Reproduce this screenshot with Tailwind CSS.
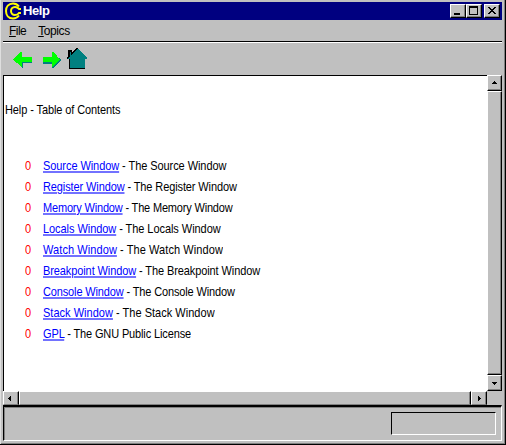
<!DOCTYPE html>
<html lang="en"><head><meta charset="utf-8"><title>Help</title>
<script src="https://cdn.jsdelivr.net/npm/@tailwindcss/browser@4"></script></head>
<body class="w-[506px] h-[445px] overflow-hidden bg-[#c0c0c0] text-black text-[12px] font-['Liberation_Sans',Arial,sans-serif]">
<div class="w-[506px] h-[445px] flex flex-col pl-[2px] pt-[2px] pr-[2px] border-r border-b border-black shadow-[inset_1px_0_0_#dfdfdf,inset_-1px_-1px_0_#808080]">
  <header class="h-[18px] mr-[1px] ml-[1px] bg-[#000080] flex items-center shrink-0 pr-[2px]">
    <svg class="w-[18px] h-[18px] ml-[1px]" viewBox="0 0 18 18" fill="none" stroke="#ff0" stroke-width="2"><path d="M15 4.500C13.500 2.500 11.500 1.500 9 1.500C4.500 1.500 2 5 2 9s2.500 7.500 7 7.500c2.500 0 4.500-1 6-3"/><path d="M17 7h-2C14 5.500 12.500 5 11 5C8.500 5 7 7 7 9s1.500 4 4 4c1.500 0 3-.5 4-2h2"/></svg>
    <h1 class="text-white font-bold text-[13px] leading-[18px] ml-[1px] tracking-[-0.45px]">Help</h1>
    <div class="ml-auto flex">
      <button class="w-[16px] h-[14px] bg-[#c0c0c0] border border-t-white border-l-white border-r-black border-b-black shadow-[inset_-1px_-1px_0_#808080]"><svg class="block" width="14" height="12" shape-rendering="crispEdges"><path d="M3 8h6v2H3z"/></svg></button>
      <button class="w-[16px] h-[14px] bg-[#c0c0c0] border border-t-white border-l-white border-r-black border-b-black shadow-[inset_-1px_-1px_0_#808080]"><svg class="block" width="14" height="12" shape-rendering="crispEdges"><path fill-rule="evenodd" d="M2 1h9v9H2zM3 3v6h7V3z"/></svg></button>
      <button class="ml-[2px] w-[16px] h-[14px] bg-[#c0c0c0] border border-t-white border-l-white border-r-black border-b-black shadow-[inset_-1px_-1px_0_#808080]"><svg class="block" width="14" height="12" shape-rendering="crispEdges"><path d="M3 2h2v1h1v1h2V3h1V2h2v1h-1v1H9v1H8v1h1v1h1v1h1v1H9V8H8V7H6v1H5v1H3V8h1V7h1V6h1V5H5V4H4V3H3z"/></svg></button>
    </div>
  </header>
  <nav class="h-[23px] ml-[1px] mr-[1px] mt-[-1px] pt-[1px] pl-[6px] flex items-center gap-[12px] shrink-0 border-b border-black shadow-[0_1px_0_white]">
    <span class="tracking-[-0.55px]"><u class="underline-offset-1">F</u>ile</span><span class="tracking-[-0.4px]"><u class="underline-offset-1">T</u>opics</span>
  </nav>
  <div class="h-[33px] shrink-0 pl-[11px] pt-[5px] flex">
    <svg width="76" height="26" shape-rendering="crispEdges">
      <path fill="#008080" d="M1 13l8 8h1v-5h9v-5h-2z"/><path fill="#0f0" d="M0 12.500l8-8h1v5h10v5H9v5H8z"/>
      <path fill="#008080" d="M30 15v2h9v4h2l7-8-1-2z"/><path fill="#0f0" d="M30 9.500h9v-5h1l7 8-7 7h-1v-5h-9z"/>
      <path fill="#000" d="M54 12v-2l1-1V3h4v3l4-5h2l8 10v1h-1v10H56V12z"/><path fill="#008080" d="M55 12l2-3V5h1v4l6-7h1l9 9v1h-2v9H57v-9z"/>
    </svg>
  </div>
  <div class="h-[316px] shrink-0 ml-[1px] flex">
    <main class="w-[484px] h-[316px] bg-white border-t border-l border-black pl-[1px] pt-[27px] text-[11px]">
      <p class="leading-[15px] whitespace-nowrap tracking-[-0.1px] scale-y-110">Help - Table of Contents</p>
      <ul class="mt-[38px] leading-[21px] whitespace-nowrap [&_li]:flex [&_li]:h-[21px] [&_i]:not-italic [&_i]:text-[#ff0000] [&_i]:w-[18px] [&_i]:ml-[20px] [&_li]:scale-y-110 [&_a]:text-[#0000ff] [&_a]:underline [&_a]:underline-offset-1">
        <li><i>0</i><span class="tracking-[-0.07px]"><a>Source Window</a> - The Source Window</span></li>
        <li><i>0</i><span class="tracking-[-0.11px]"><a>Register Window</a> - The Register Window</span></li>
        <li><i>0</i><span class="tracking-[-0.18px]"><a>Memory Window</a> - The Memory Window</span></li>
        <li><i>0</i><span class="tracking-[-0.06px]"><a>Locals Window</a> - The Locals Window</span></li>
        <li><i>0</i><span class="tracking-[0.08px]"><a>Watch Window</a> - The Watch Window</span></li>
        <li><i>0</i><span class="tracking-[-0.1px]"><a>Breakpoint Window</a> - The Breakpoint Window</span></li>
        <li><i>0</i><span class="tracking-[-0.14px]"><a>Console Window</a> - The Console Window</span></li>
        <li><i>0</i><span class="tracking-[0.02px]"><a>Stack Window</a> - The Stack Window</span></li>
        <li><i>0</i><span class="tracking-[-0.13px]"><a>GPL</a> - The GNU Public License</span></li>
      </ul>
    </main>
    <div class="w-[15px] flex flex-col [&>div]:border [&>div]:border-t-white [&>div]:border-l-white [&>div]:border-r-black [&>div]:border-b-black [&>div]:shadow-[inset_-1px_-1px_0_#808080]">
      <div class="h-[16px]"><svg width="13" height="14" shape-rendering="crispEdges"><path d="M6 5h1v1h1v1h1v1H4V7h1V6h1z"/></svg></div>
      <div class="h-[284px]"></div>
      <div class="h-[16px]"><svg width="13" height="14" shape-rendering="crispEdges"><path d="M4 6h5v1H8v1H7v1H6V8H5V7H4z"/></svg></div>
    </div>
  </div>
  <div class="h-[14px] shrink-0 ml-[1px] flex [&>div]:border [&>div]:border-t-white [&>div]:border-l-white [&>div]:border-r-black [&>div]:border-b-[#808080] [&>div]:shadow-[inset_-1px_0_0_#808080]">
    <div class="w-[16px]"><svg width="14" height="12" shape-rendering="crispEdges"><path d="M7 4v5H6V8H5V7H4V6h1V5h1V4z"/></svg></div>
    <div class="w-[452px]"></div>
    <div class="w-[16px]"><svg width="14" height="12" shape-rendering="crispEdges"><path d="M6 4v5h1V8h1V7h1V6H8V5H7V4z"/></svg></div>
  </div>
  <footer class="h-[36px] shrink-0 ml-[1px] w-[499px] border-t-2 border-l border-t-black border-l-black border-r border-b border-r-white border-b-white shadow-[inset_1px_1px_0_#808080] flex">
    <div class="ml-[387px] mt-[5px] w-[105px] h-[23px] border border-t-black border-l-black border-r-white border-b-white"></div>
  </footer>
</div>
</body></html>
